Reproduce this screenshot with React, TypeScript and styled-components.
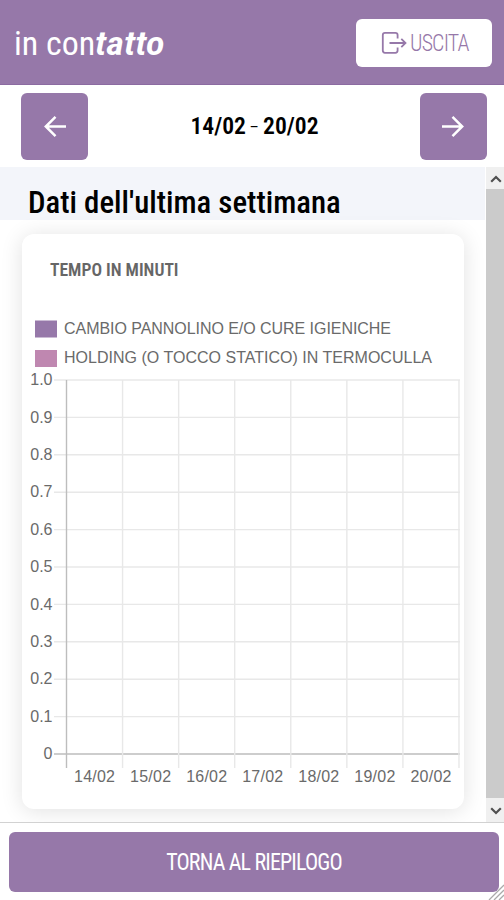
import React from "react";
import styled, { createGlobalStyle } from "styled-components";

const PURPLE = "#9678a9";

const GlobalStyle = createGlobalStyle`
  * { box-sizing: border-box; }
  html, body { margin: 0; padding: 0; background: #fff; overflow: hidden; }
  button { font: inherit; border: 0; padding: 0; margin: 0; }
`;

const Page = styled.div`
  position: relative;
  display: flex;
  flex-direction: column;
  width: 504px;
  height: 900px;
  overflow: hidden;
  background: #fff;
  font-family: "Roboto Condensed", Roboto, sans-serif;
  font-stretch: 75%;
`;

const Header = styled.header`
  flex: none;
  display: flex;
  align-items: center;
  justify-content: space-between;
  height: 85px;
  padding: 1px 12px 0 14px;
  background: ${PURPLE};
  border-bottom: 1px solid #8b6ba1;
`;

const Brand = styled.div`
  color: #fff;
  font-size: 34px;
  line-height: 40px;
  white-space: nowrap;
`;

const BrandAccent = styled.em`
  display: inline-block;
  font-weight: 650;
  transform: scaleX(1.13);
  transform-origin: left;
`;

const ExitButton = styled.button`
  display: flex;
  align-items: center;
  justify-content: flex-start;
  gap: 3px;
  width: 136px;
  height: 48px;
  padding-left: 25px;
  border-radius: 6px;
  background: #fff;
  color: ${PURPLE};
  font-size: 24px;
  font-weight: 350;
  letter-spacing: -0.9px;
  svg { flex: none; }
`;

const WeekBar = styled.nav`
  flex: none;
  display: flex;
  align-items: center;
  justify-content: space-between;
  height: 82px;
  padding: 0 17px 0 21px;
`;

const ArrowButton = styled.button`
  display: flex;
  align-items: center;
  justify-content: center;
  width: 67px;
  height: 67px;
  border-radius: 6px;
  background: ${PURPLE};
`;

const WeekRange = styled.div`
  display: flex;
  align-items: center;
  gap: 5.5px;
  padding-left: 1px;
  font-size: 23.6px;
  line-height: 28px;
  font-weight: 600;
  color: #000;
`;

const RangeDash = styled.span`
  font-weight: 300;
  transform: scaleX(1.45);
`;

const Body = styled.div`
  flex: none;
  display: flex;
  height: 655px;
`;

const Scroll = styled.main`
  flex: 1;
  overflow: hidden;
  background: #fff;
`;

const Heading = styled.h1`
  margin: 0 1px 0 0;
  height: 53px;
  padding: 17px 0 0 28px;
  background: #f3f5fa;
  color: #000;
  font-size: 30.9px;
  line-height: 38px;
  font-weight: 550;
  white-space: nowrap;
`;

const Card = styled.section`
  width: 442px;
  height: 575px;
  margin: 14px 0 0 22px;
  border-radius: 12px;
  background: #fff;
  box-shadow: 0 2px 22px rgba(0, 0, 0, 0.12);
`;

const CardTitle = styled.h2`
  margin: 0;
  padding: 25px 0 0 28px;
  height: 80px;
  color: #666;
  font-size: 17.6px;
  line-height: 22px;
  font-weight: 600;
`;

const Chart = styled.svg`
  display: block;
  text {
    font-family: "Liberation Sans", Arial, sans-serif;
    font-size: 16px;
    font-stretch: normal;
    fill: #6a6a6a;
  }
`;

const Scrollbar = styled.div`
  display: flex;
  flex-direction: column;
  width: 18px;
  background: #f0f0f0;
`;

const ScrollArrow = styled.div<{ $h: number }>`
  flex: none;
  display: flex;
  align-items: center;
  justify-content: center;
  height: ${(p) => p.$h}px;
  padding: 2px 0 0 2px;
`;

const Thumb = styled.div`
  flex: 1;
  background: #cbcbcb;
`;

const Footer = styled.footer`
  flex: 1;
  display: flex;
  padding: 9px 5px 8px 9px;
  border-top: 1px solid #d2d2d2;
`;

const BackButton = styled.button`
  width: 490px;
  height: 60px;
  border-radius: 6px;
  background: ${PURPLE};
  color: #fff;
  font-size: 24px;
  font-weight: 450;
  letter-spacing: -0.9px;
`;

const Grip = styled.svg`
  position: absolute;
  right: 0;
  bottom: 0;
`;

const Narrow = styled.span<{ $x: number; $origin?: string }>`
  display: inline-block;
  white-space: pre;
  transform: scaleX(${(p) => p.$x});
  transform-origin: ${(p) => p.$origin ?? "center"};
`;

const Arrow = ({ back }: { back?: boolean }) => (
  <svg width="24" height="24" viewBox="0 0 24 24" fill="none" stroke="#fff" strokeWidth="2.5">
    <path d={back ? "M23 12.5H3M12.5 2.8L2.8 12.5L12.5 22.2" : "M1 12.5H21M11.5 2.8L21.2 12.5L11.5 22.2"} />
  </svg>
);

const days = ["14/02", "15/02", "16/02", "17/02", "18/02", "19/02", "20/02"];
const ticks = ["1.0", "0.9", "0.8", "0.7", "0.6", "0.5", "0.4", "0.3", "0.2", "0.1", "0"];
const series = [
  { label: "CAMBIO PANNOLINO E/O CURE IGIENICHE", color: "#9678a9", width: 327 },
  { label: "HOLDING (O TOCCO STATICO) IN TERMOCULLA", color: "#bf87b0", width: 368 },
];

const X0 = 44.5;
const Y0 = 66;
const STEP_X = 56.07;
const STEP_Y = 37.4;

const MinutesChart = () => (
  <Chart width="442" height="490" viewBox="0 0 442 490">
    {series.map((s, i) => (
      <g key={s.label}>
        <rect x="13" y={6.5 + i * 29.5} width="22" height="17" fill={s.color} />
        <text x="42" y={19.5 + i * 29.5} textLength={s.width}>{s.label}</text>
      </g>
    ))}
    {ticks.map((t, i) => (
      <g key={t}>
        <line x1="32" x2="438" y1={Y0 + i * STEP_Y} y2={Y0 + i * STEP_Y} stroke={i === 10 ? "#bdbdbd" : "#e8e8e8"} strokeWidth="1.4" />
        <text x="30.5" y={Y0 + 5.2 + i * STEP_Y} textAnchor="end">{t}</text>
      </g>
    ))}
    {[...days, ""].map((_, i) => (
      <line key={i} x1={X0 + i * STEP_X} x2={X0 + i * STEP_X} y1={Y0} y2={Y0 + 388} stroke={i === 0 ? "#bdbdbd" : "#e8e8e8"} strokeWidth="1.4" />
    ))}
    {days.map((d, i) => (
      <text key={d} x={X0 + 28 + i * STEP_X} y="468" textAnchor="middle" textLength="41">{d}</text>
    ))}
  </Chart>
);

export default function App() {
  return (
    <Page>
      <GlobalStyle />
      <Header>
        <Brand>in con<BrandAccent>tatto</BrandAccent></Brand>
        <ExitButton>
          <svg width="26" height="24" viewBox="0 0 26 24" fill="none" stroke={PURPLE} strokeWidth="1.8">
            <path d="M16.6 7.5V4Q16.6 1.8 14.4 1.8H4Q1.8 1.8 1.8 4V19.6Q1.8 21.8 4 21.8H14.4Q16.6 21.8 16.6 19.6V16.5" />
            <path d="M8.5 12H24M20.3 7.8L24.5 12L20.3 16.2" />
          </svg>
          <Narrow $x={0.91} $origin="left">USCITA</Narrow>
        </ExitButton>
      </Header>
      <WeekBar>
        <ArrowButton aria-label="Settimana precedente"><Arrow back /></ArrowButton>
        <WeekRange>
          <span>14/02</span>
          <RangeDash>-</RangeDash>
          <span>20/02</span>
        </WeekRange>
        <ArrowButton aria-label="Settimana successiva"><Arrow /></ArrowButton>
      </WeekBar>
      <Body>
        <Scroll>
          <Heading>Dati dell'ultima settimana</Heading>
          <Card>
            <CardTitle>TEMPO IN MINUTI</CardTitle>
            <MinutesChart />
          </Card>
        </Scroll>
        <Scrollbar>
          <ScrollArrow $h={22}>
            <svg width="12" height="8" viewBox="0 0 12 8" fill="none" stroke="#505050" strokeWidth="2.2"><path d="M1.2 6.8L6 2L10.8 6.8" /></svg>
          </ScrollArrow>
          <Thumb />
          <ScrollArrow $h={24}>
            <svg width="12" height="8" viewBox="0 0 12 8" fill="none" stroke="#505050" strokeWidth="2.2"><path d="M1.2 1.2L6 6L10.8 1.2" /></svg>
          </ScrollArrow>
        </Scrollbar>
      </Body>
      <Footer>
        <BackButton><Narrow $x={0.915}>TORNA AL RIEPILOGO</Narrow></BackButton>
      </Footer>
      <Grip width="16" height="16" viewBox="0 0 16 16" fill="none">
        <path d="M16 0V16H0Z" fill="#fff" />
        <path d="M1 16L16 1M6 16L16 6M11 16L16 11" stroke="#aaa" strokeWidth="1.3" />
      </Grip>
    </Page>
  );
}
